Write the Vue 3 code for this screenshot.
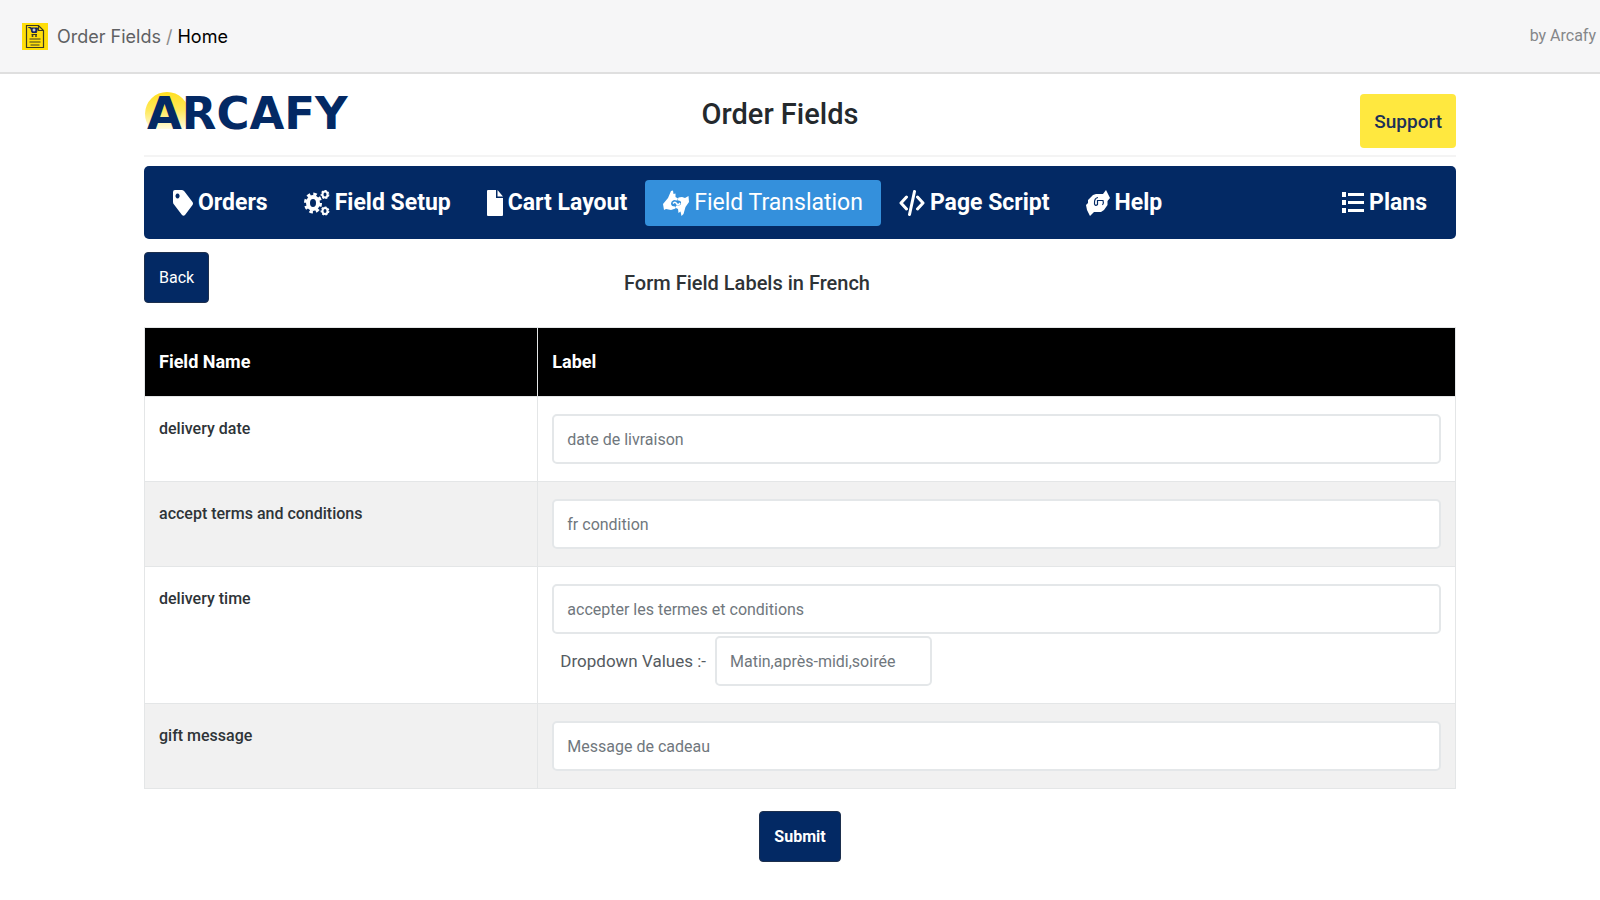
<script setup>
import { ref } from 'vue';

const active = ref('translation'); // the highlighted menu item

const menu = [
  { id: 'orders', text: 'Orders', width: 20 },
  { id: 'setup', text: 'Field Setup', width: 26 },
  { id: 'cart', text: 'Cart Layout', width: 16 },
  { id: 'translation', text: 'Field Translation', width: 26 },
  { id: 'script', text: 'Page Script', width: 26 },
  { id: 'help', text: 'Help', width: 24 },
  { id: 'plans', text: 'Plans', width: 22 },
];

const fields = ref([
  { id: 'date', name: 'delivery date', label: 'date de livraison' },
  { id: 'terms', name: 'accept terms and conditions', label: 'fr condition' },
  { id: 'time', name: 'delivery time', label: 'accepter les termes et conditions', options: 'Matin,après-midi,soirée' },
  { id: 'gift', name: 'gift message', label: 'Message de cadeau' },
]);
</script>

<template>
  <header class="topbar">
    <svg class="app-icon" viewBox="0 0 26 27" aria-hidden="true">
      <rect width="26" height="27" fill="#ffde0a" />
      <path d="M4.500 2.500H16.500L21.500 7.500V24.500H4.500Z M16.500 2.500V7.500H21.500" fill="none" stroke="#3a3a24" stroke-width="1.200" />
      <path d="M6.500 4.500H8.500L10 9.500H14.500L15.500 5H9Z" fill="#16245c" stroke="#16245c" />
      <path d="M12 5.500v3M10.500 7h3" stroke="#fff" />
      <path d="M9.500 11.500H15" stroke="#3a3a24" />
      <circle cx="10.500" cy="13" r="1" fill="#3a3a24" />
      <circle cx="14" cy="13" r="1" fill="#3a3a24" />
      <path d="M7.500 16H18.500M7.500 19H18.500M8.500 22H17.500" stroke="#3a3a24" stroke-width="1.200" />
    </svg>
    <nav class="crumbs">
      <a href="#">Order Fields</a>
      <span class="slash">/</span>
      <span class="here">Home</span>
    </nav>
    <span class="by">by Arcafy</span>
  </header>

  <main class="page">
    <div class="titlebar">
      <svg class="logo" viewBox="0 0 224 54" role="img" aria-label="Arcafy">
        <defs>
          <linearGradient id="sun" x1="0" y1="0" x2="0" y2="1">
            <stop offset="0" stop-color="#ffdf20" />
            <stop offset="0.500" stop-color="#ffe95c" />
            <stop offset="1" stop-color="#fffbe0" />
          </linearGradient>
        </defs>
        <path d="M7 43A22 22 0 1 1 39 43Z" fill="url(#sun)" />
        <text x="3" y="43" class="logo-text">ARCAFY</text>
      </svg>
      <h1>Order Fields</h1>
      <button type="button" class="support">Support</button>
    </div>

    <nav class="menu">
      <a
        v-for="item in menu"
        :key="item.id"
        href="#"
        :class="['item', item.id, { active: active === item.id }]"
        @click.prevent="active = item.id"
      >
        <svg :viewBox="`0 0 ${item.width} 26`" :width="item.width" height="26" fill="#fff" aria-hidden="true">
          <path
            v-if="item.id === 'orders'"
            fill-rule="evenodd"
            d="M0 2Q0 0 2 0H9Q10.500 0 11.500 1.500L19.500 12Q20.500 13.500 19.500 15L12 25Q10.500 26.500 9 25L1 14.500Q0 13.500 0 12ZM4.500 3.500A2 2.500 0 1 0 4.600 3.500Z"
          />
          <g v-else-if="item.id === 'setup'">
            <ellipse cx="9" cy="13" rx="5" ry="6" fill="none" stroke="#fff" stroke-width="4" />
            <ellipse cx="9" cy="13" rx="7.500" ry="9" fill="none" stroke="#fff" stroke-width="3" stroke-dasharray="3.500 3" />
            <ellipse cx="21" cy="4.500" rx="2.500" ry="3" fill="none" stroke="#fff" stroke-width="2" />
            <ellipse cx="21" cy="4.500" rx="3.800" ry="4" fill="none" stroke="#fff" stroke-width="1.200" stroke-dasharray="2 1.500" />
            <ellipse cx="21" cy="21" rx="2.500" ry="3" fill="none" stroke="#fff" stroke-width="2" />
            <ellipse cx="21" cy="21" rx="3.800" ry="4" fill="none" stroke="#fff" stroke-width="1.200" stroke-dasharray="2 1.500" />
          </g>
          <path v-else-if="item.id === 'cart'" d="M0 1Q0 0 1 0H9V8H16V25Q16 26 15 26H1Q0 26 0 25ZM10.500 0L16 6.500H10.500Z" />
          <g v-else-if="item.id === 'translation'">
            <path d="M0 14L5 8L8 1L10 0.500L10.500 4L12.500 3.500L12.500 7L15 8.500L14 10.500L11 10Q8 11 8 14Q8.500 16.500 12 16.500L12.500 18.500L8 20L3 19L1 20Z" />
            <path d="M25.500 6L26 12L22.500 17L20.500 24L18.500 26L17.500 21.500L15.500 23L15 19L12 17.500L13.500 15.500H16Q18.500 14.500 18 12Q17.500 10 14.500 10.500L15.500 7.500L19 7L22 8Z" />
            <path d="M10 13.500Q12 11 13.500 13.500T17 13" fill="none" stroke="#fff" stroke-width="1.500" />
          </g>
          <path
            v-else-if="item.id === 'script'"
            d="M7.500 7L2 13L7.500 19M18.500 7L24 13L18.500 19M15.500 1.500L10.500 24.500"
            fill="none"
            stroke="#fff"
            stroke-width="3"
            stroke-linecap="round"
            stroke-linejoin="round"
          />
          <g v-else-if="item.id === 'help'">
            <path d="M0 15L2 13V10L7 5L10 4H17L20 0L24 8L21.500 11V15L18 20L15 22H8L4 26L1 20Z" />
            <path d="M12 7.500Q8 8 8.500 14Q9.500 16.500 11.500 14.500V10.500H17Q18 13 16.500 15" fill="none" stroke="#032964" stroke-width="1.200" />
          </g>
          <g v-else>
            <rect y="2" width="4" height="5" />
            <rect y="10" width="4" height="5" />
            <rect y="18" width="4" height="5" />
            <rect x="6" y="3" width="16" height="3" />
            <rect x="6" y="11" width="16" height="3" />
            <rect x="6" y="19" width="16" height="3" />
          </g>
        </svg>
        <span>{{ item.text }}</span>
      </a>
    </nav>

    <form @submit.prevent>
      <div class="subhead">
        <button type="button" class="btn">Back</button>
        <h2>Form Field Labels in French</h2>
      </div>

      <table>
        <thead>
          <tr>
            <th>Field Name</th>
            <th>Label</th>
          </tr>
        </thead>
        <tbody>
          <tr v-for="field in fields" :key="field.id">
            <td><label :for="field.id">{{ field.name }}</label></td>
            <td>
              <input :id="field.id" v-model="field.label" type="text" />
              <!-- only dropdown fields have values to translate -->
              <div v-if="field.options" class="options">
                <label :for="field.id + '-options'">Dropdown Values :-</label>
                <input :id="field.id + '-options'" v-model="field.options" type="text" />
              </div>
            </td>
          </tr>
        </tbody>
      </table>

      <div class="actions">
        <button type="submit" class="btn submit">Submit</button>
      </div>
    </form>
  </main>
</template>

<style>
body {
  margin: 0;
  background: #fff;
  font-family: Roboto, "Liberation Sans", sans-serif;
}
</style>

<style scoped>
* {
  box-sizing: border-box;
}

a {
  color: inherit;
  text-decoration: none;
}

button,
input {
  font-family: inherit;
}

.topbar {
  display: flex;
  align-items: center;
  height: 74px;
  padding: 0 4px 0 22px;
  background: #f6f6f7;
  border-bottom: 2px solid #dfdfdf;
}

.app-icon {
  width: 26px;
  height: 27px;
}

.crumbs {
  display: flex;
  gap: 5px;
  margin-left: 9px;
  font-family: Inter, sans-serif;
  font-size: 18px;
  color: #5f6163;
}

.slash {
  color: #8c8c8c;
}

.here {
  color: #000;
}

.by {
  margin-left: auto;
  font-size: 16px;
  line-height: 24px;
  color: #85878a;
}

.page {
  padding: 0 9%;
}

.titlebar {
  display: grid;
  grid-template-columns: 1fr auto 1fr;
  align-items: start;
  height: 83px;
  padding-top: 12px;
  border-bottom: 2px solid #f4f4f4;
}

.logo {
  width: 224px;
  height: 54px;
  overflow: visible;
}

.logo-text {
  font-family: "DejaVu Sans", sans-serif;
  font-size: 45px;
  font-weight: bold;
  fill: #032964;
}

h1 {
  margin: 8px 40px 0 0;
  font-size: 29px;
  line-height: 40px;
  font-weight: 500;
  color: #24292d;
}

.support {
  justify-self: end;
  height: 54px;
  margin-top: 8px;
  padding: 0 14px;
  border: 0;
  border-radius: 4px;
  background: #ffe83f;
  color: #1c3157;
  font-size: 19px;
  font-weight: 500;
}

.menu {
  display: flex;
  align-items: center;
  height: 73px;
  margin-top: 9px;
  padding: 0 11px;
  border-radius: 5px;
  background: #032964;
  color: #fff;
}

.item {
  display: flex;
  align-items: center;
  gap: 5px;
  height: 46px;
  padding: 0 18px;
  border-radius: 4px;
  font-size: 23px;
  font-weight: 700;
  white-space: nowrap;
}

.item.active {
  background: #3490dc;
  font-weight: 400;
}

.item.plans {
  margin-left: auto;
}

.subhead {
  display: grid;
  grid-template-columns: 1fr auto 1fr;
  align-items: start;
  padding: 13px 0 24px;
}

.btn {
  justify-self: start;
  height: 51px;
  padding: 0 14px;
  border: 1px solid #1d2f4d;
  border-radius: 4px;
  background: #032964;
  color: #fff;
  font-size: 16px;
}

h2 {
  margin: 16px 106px 0 0;
  font-size: 20px;
  line-height: 30px;
  font-weight: 500;
  color: #2e3336;
}

table {
  width: 100%;
  table-layout: fixed;
  border-collapse: collapse;
}

th,
td {
  padding: 17px 14px;
  border: 1px solid #e4e6e7;
  text-align: left;
  vertical-align: top;
  line-height: 30px;
}

th {
  padding: 19px 14px;
  background: #000;
  color: #fff;
  font-size: 18px;
  font-weight: 700;
}

th:first-child {
  width: 30%;
}

td {
  font-size: 16px;
  font-weight: 500;
  color: #2e3438;
}

tbody tr:nth-child(even) {
  background: #f1f1f1;
}

input {
  display: block;
  width: 100%;
  height: 50px;
  padding: 0 13px;
  border: 2px solid #e4e7e9;
  border-radius: 5px;
  background: #fff;
  color: #70777d;
  font-size: 16px;
}

.options {
  display: flex;
  align-items: center;
  gap: 9px;
  margin-top: 2px;
  padding-left: 8px;
  font-size: 17px;
  font-weight: 400;
  color: #555b61;
}

.options input {
  width: 217px;
}

.actions {
  display: flex;
  justify-content: center;
  padding: 22px 0 38px;
}

.submit {
  font-size: 16px;
  font-weight: 700;
}
</style>
